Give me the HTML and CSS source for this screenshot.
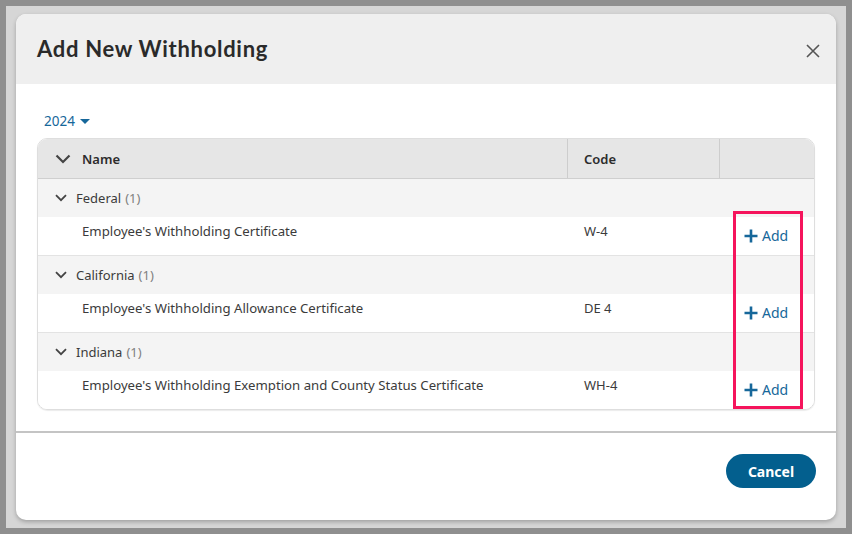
FILE: index.html
```html
<!DOCTYPE html>
<html lang="en">
  <head>
    <meta charset="UTF-8" />
    <meta name="viewport" content="width=device-width, initial-scale=1.0" />
    <title>Add New Withholding</title>
    <link rel="stylesheet" href="styles.css">
  </head>

  <body>
    <div class="backdrop">
      <div class="modal">
        <div class="modal-head">
          <h1>Add New Withholding</h1>
          <button class="close" aria-label="Close">
            <svg width="16" height="16" viewBox="0 0 16 16"><path d="M2 2 L14 14 M14 2 L2 14" stroke="#555" stroke-width="1.6" fill="none"/></svg>
          </button>
        </div>

        <div class="modal-body">
          <div class="year">2024 <span class="caret"></span></div>

          <div class="table">
            <div class="row head">
              <div class="cell name">
                <svg class="chev big" viewBox="0 0 16 10"><path d="M1.5 1.5 L8 8 L14.5 1.5" stroke="#444" stroke-width="2.2" fill="none"/></svg>
                Name
              </div>
              <div class="cell code">Code</div>
              <div class="cell act"></div>
            </div>

            <div class="row group">
              <svg class="chev" viewBox="0 0 12 8"><path d="M1 1.2 L6 6.2 L11 1.2" stroke="#444" stroke-width="1.8" fill="none"/></svg>
              Federal <span class="count">(1)</span>
            </div>
            <div class="row item">
              <div class="cell name">Employee's Withholding Certificate</div>
              <div class="cell code">W-4</div>
              <div class="cell act">
                <a class="add"><svg class="plus" viewBox="0 0 14 14"><path d="M7 0.5 V13.5 M0.5 7 H13.5" stroke="#16679a" stroke-width="2.6" fill="none"/></svg>Add</a>
              </div>
            </div>

            <div class="row group">
              <svg class="chev" viewBox="0 0 12 8"><path d="M1 1.2 L6 6.2 L11 1.2" stroke="#444" stroke-width="1.8" fill="none"/></svg>
              California <span class="count">(1)</span>
            </div>
            <div class="row item">
              <div class="cell name">Employee's Withholding Allowance Certificate</div>
              <div class="cell code">DE 4</div>
              <div class="cell act">
                <a class="add"><svg class="plus" viewBox="0 0 14 14"><path d="M7 0.5 V13.5 M0.5 7 H13.5" stroke="#16679a" stroke-width="2.6" fill="none"/></svg>Add</a>
              </div>
            </div>

            <div class="row group">
              <svg class="chev" viewBox="0 0 12 8"><path d="M1 1.2 L6 6.2 L11 1.2" stroke="#444" stroke-width="1.8" fill="none"/></svg>
              Indiana <span class="count">(1)</span>
            </div>
            <div class="row item last">
              <div class="cell name">Employee's Withholding Exemption and County Status Certificate</div>
              <div class="cell code">WH-4</div>
              <div class="cell act">
                <a class="add"><svg class="plus" viewBox="0 0 14 14"><path d="M7 0.5 V13.5 M0.5 7 H13.5" stroke="#16679a" stroke-width="2.6" fill="none"/></svg>Add</a>
              </div>
            </div>

            <div class="highlight"></div>
          </div>
        </div>

        <div class="modal-foot">
          <button class="cancel">Cancel</button>
        </div>
      </div>
    </div>
  </body>
</html>
```

FILE: styles.css
```css
html,
body {
  margin: 0;
  height: 100%;
}

body {
  background: #8f8f8f;
  padding: 6px;
  box-sizing: border-box;
  font-family: "Noto Sans", "Open Sans", sans-serif;
  color: #3b3b3b;
}

.backdrop {
  height: 100%;
  background: #d6d6d6;
  padding: 8px 10px;
  box-sizing: border-box;
}

.modal {
  height: 506px;
  background: #fff;
  border-radius: 10px;
  overflow: hidden;
  box-shadow: 0 2px 4px rgba(0, 0, 0, 0.25);
  display: flex;
  flex-direction: column;
}

/* header */
.modal-head {
  height: 70px;
  background: #efefef;
  display: flex;
  align-items: center;
  justify-content: space-between;
  padding: 0 15px 0 21px;
}

.modal-head h1 {
  margin: 0;
  font-family: "Lato", sans-serif;
  font-weight: 700;
  font-size: 22px;
  letter-spacing: 0.7px;
  color: #2a2a2a;
  padding-bottom: 2px;
}

.close {
  border: 0;
  background: none;
  padding: 0;
  width: 16px;
  height: 16px;
  margin-top: 4px;
}

/* body */
.modal-body {
  padding: 0 21px;
  height: 347px;
}

.year {
  color: #16679a;
  font-size: 13.5px;
  padding: 28px 0 0 7px;
  height: 26px;
  box-sizing: content-box;
  display: flex;
  align-items: flex-start;
  gap: 5px;
}

.caret {
  width: 0;
  height: 0;
  border-left: 5px solid transparent;
  border-right: 5px solid transparent;
  border-top: 5px solid #16679a;
  margin-top: 7px;
}

.table {
  position: relative;
  border: 1px solid #dedede;
  border-radius: 10px;
  overflow: hidden;
  box-shadow: 0 1px 1px rgba(0, 0, 0, 0.08);
}

.row {
  display: flex;
  font-size: 13px;
}

.cell.name {
  width: 530px;
  flex-shrink: 0;
}

.cell.code {
  width: 152px;
  flex-shrink: 0;
}

.cell.act {
  flex: 1;
}

.row.head {
  height: 40px;
  background: #e6e6e6;
  border-bottom: 1px solid #cfcfcf;
  box-sizing: border-box;
  font-weight: 600;
  color: #2c2c2c;
}

.row.head .cell {
  display: flex;
  align-items: center;
  box-sizing: border-box;
}

.row.head .cell.name {
  padding-left: 17px;
  gap: 11px;
  border-right: 1px solid #cdcdcd;
}

.row.head .cell.code {
  padding-left: 16px;
  border-right: 1px solid #cdcdcd;
}

.chev {
  width: 12px;
  height: 8px;
}

.chev.big {
  width: 16px;
  height: 10px;
}

.row.group {
  height: 38px;
  background: #f4f4f4;
  align-items: center;
  padding-left: 17px;
  color: #3b3b3b;
}

.row.group .chev {
  margin-right: 9px;
}

.count {
  color: #808080;
  margin-left: 4px;
}

.row.item {
  height: 39px;
  background: #fff;
  border-bottom: 1px solid #e3e3e3;
  box-sizing: border-box;
}

.row.item.last {
  border-bottom: 0;
  height: 38px;
}

.row.item .cell.name {
  padding: 5px 0 0 44px;
  box-sizing: border-box;
  font-size: 13.2px;
}

.row.item .cell.code {
  padding: 5px 0 0 16px;
  box-sizing: border-box;
}

.row.item .cell.act {
  padding: 9px 0 0 0;
}

.add {
  display: inline-flex;
  align-items: center;
  color: #16679a;
  font-size: 14px;
  margin-left: 24px;
}

.plus {
  width: 14px;
  height: 14px;
  margin-right: 4px;
}

.highlight {
  position: absolute;
  left: 695px;
  top: 72px;
  width: 64px;
  height: 192px;
  border: 3px solid #f5145c;
}

/* footer */
.modal-foot {
  border-top: 2px solid #c4c4c4;
  flex: 1;
  display: flex;
  justify-content: flex-end;
  padding: 21px 20px 0 0;
}

.cancel {
  width: 90px;
  height: 34px;
  border: 0;
  border-radius: 17px;
  background: #035f8e;
  color: #fff;
  font-family: "Noto Sans", sans-serif;
  font-weight: 700;
  font-size: 14px;
}
```
